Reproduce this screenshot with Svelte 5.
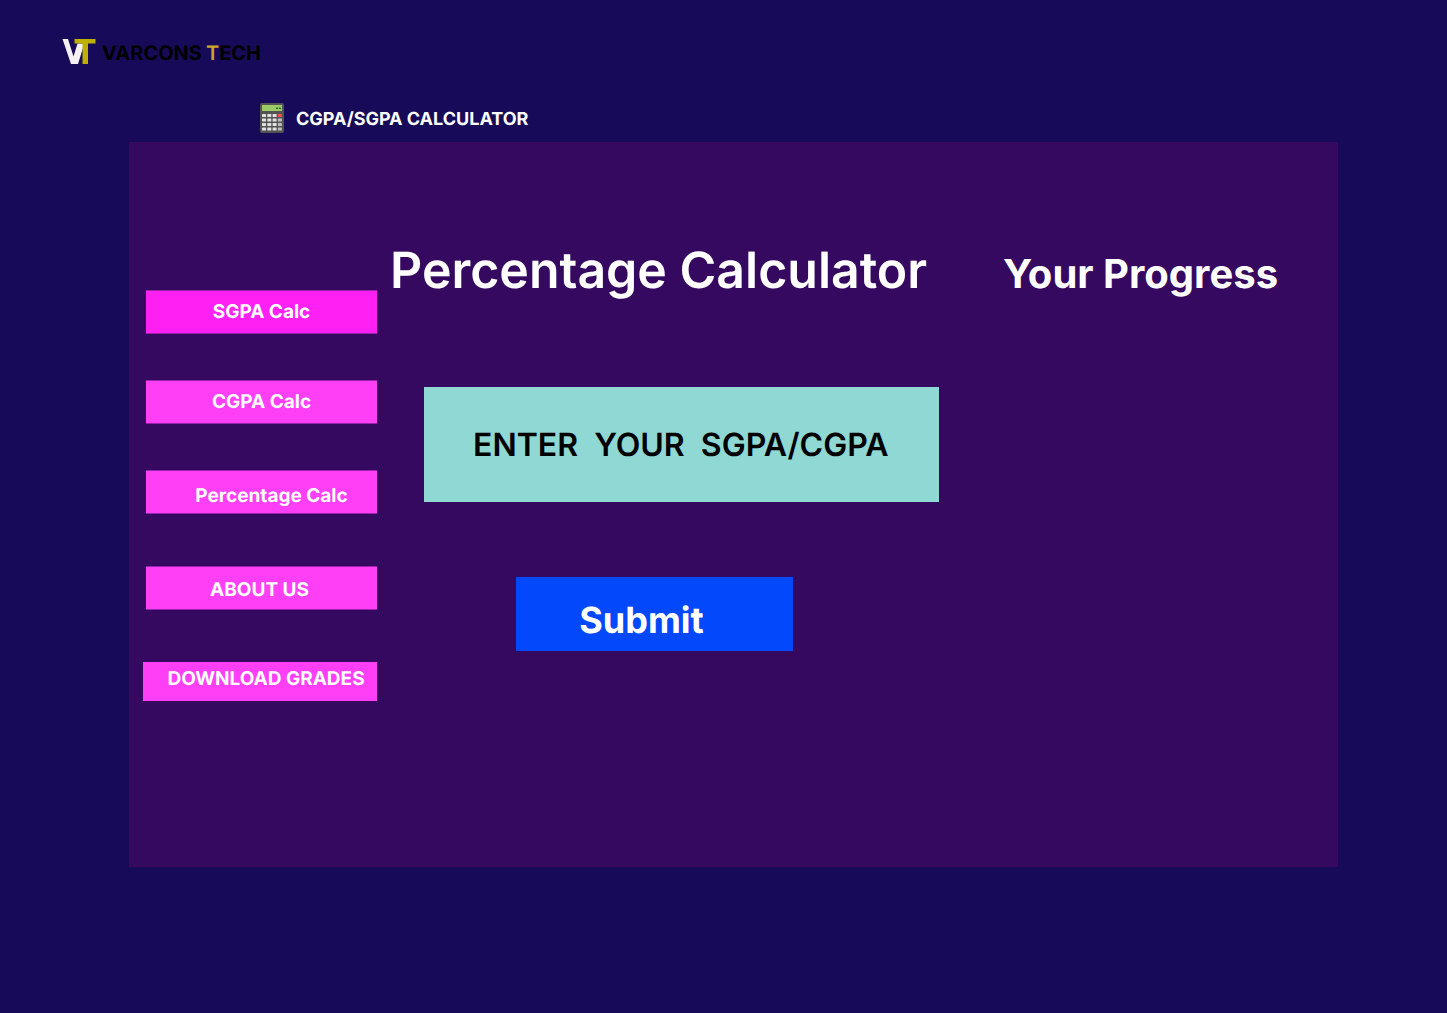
<script>
  const links = [
    { label: 'SGPA Calc', kind: 'active' },
    { label: 'CGPA Calc', kind: '' },
    { label: 'Percentage Calc', kind: 'inset' },
    { label: 'ABOUT US', kind: 'info' },
    { label: 'DOWNLOAD GRADES', kind: 'download' }
  ];
  const keys = [0, 1, 2, 3].flatMap((row) => [0, 1, 2, 3].map((col) => ({ row, col })));
  let score = $state('');
</script>

<div class="page">
  <header>
    <a class="brand" href="#home">
      <svg width="34" height="26" viewBox="0 0 34 26" aria-hidden="true">
        <path d="M0.500 0H6L11.5 17.500L15.500 4.500H21V9L16 25H9Z" fill="#f5f1f3" />
        <path d="M12.500 0H33.500V4.500H26V25H20.500V4.500H12.500Z" fill="#bdb000" />
      </svg>
      <span class="name">VARCONS<b>T</b>ECH</span>
    </a>
    <div class="title">
      <svg width="24" height="30" viewBox="0 0 24 30" aria-hidden="true">
        <rect width="24" height="30" rx="2" fill="#535353" />
        <rect x="2" y="2" width="20" height="6" fill="#9ccc65" />
        <path d="M16 4.500h2v1.500h-2zM19 4.500h2v1.500h-2z" fill="#33691e" />
        {#each keys as { row, col }}
          <rect
            x={2 + col * 5.3}
            y={11 + row * 4.5}
            width="4"
            height="3"
            rx="0.500"
            fill={col === 3 ? (row === 0 ? '#ff4f4f' : '#bdbdbd') : '#e0e0e0'}
          />
        {/each}
      </svg>
      <span>CGPA/SGPA CALCULATOR</span>
    </div>
  </header>

  <main>
    <nav>
      {#each links as link}
        <button type="button" class={link.kind}>{link.label}</button>
      {/each}
    </nav>
    <form onsubmit={(e) => e.preventDefault()}>
      <h1>Percentage Calculator</h1>
      <input type="text" aria-label="Enter your SGPA or CGPA" placeholder="ENTER  YOUR  SGPA/CGPA" bind:value={score} />
      <button type="submit">Submit</button>
    </form>
    <section>
      <h2>Your Progress</h2>
    </section>
  </main>
</div>

<style>
  :global(body) {
    margin: 0;
    background: #170b59;
  }
  .page {
    box-sizing: border-box;
    min-height: 100vh;
    background: #170b59;
    color: #fff;
    font-family: Inter, sans-serif;
    text-rendering: geometricPrecision;
  }
  header {
    padding: 39px 62px 9px;
  }
  .brand {
    display: flex;
    width: fit-content;
    gap: 6px;
    color: #000;
    text-decoration: none;
  }
  .name {
    font-size: 20px;
    font-weight: 700;
    line-height: 28px;
  }
  .name b {
    margin-left: 4px;
    color: #cba52c;
    font-weight: 600;
  }
  .title {
    display: flex;
    align-items: center;
    gap: 12px;
    margin: 36px 0 0 198px;
    font-size: 18px;
    font-weight: 700;
  }
  .title span {
    padding-top: 4px;
    line-height: 26px;
  }
  main {
    display: grid;
    grid-template-columns: 234px 626px 1fr;
    box-sizing: border-box;
    min-height: 725px;
    margin: 0 109px 0 129px;
    padding: 96px 14px 96px;
    background: #360961;
  }
  nav {
    display: flex;
    flex-direction: column;
    align-items: flex-end;
    gap: 46px;
    padding-top: 52px;
  }
  button {
    border: 0;
    color: #fff;
    font-family: inherit;
    text-rendering: inherit;
    cursor: pointer;
  }
  nav button {
    box-sizing: border-box;
    width: 231px;
    height: 44px;
    padding: 0;
    border: solid #9a25ac;
    border-width: 1px 0;
    background: #ff3ff5;
    background-clip: padding-box;
    font-size: 19px;
    font-weight: 700;
    line-height: 24px;
  }
  nav .active {
    background: #ff21f4;
    background-clip: padding-box;
  }
  nav .inset {
    padding: 8px 0 0 20px;
  }
  nav .info,
  nav .download {
    margin-top: 6px;
  }
  nav .info {
    padding: 4px 4px 0 0;
  }
  nav .download {
    width: 234px;
    height: 39px;
    padding: 0 0 6px 12px;
    border: 0;
  }
  form {
    display: flex;
    flex-direction: column;
    align-items: flex-start;
  }
  h1,
  h2 {
    margin: 0;
    white-space: nowrap;
  }
  h1 {
    margin-left: 13px;
    font-size: 50px;
    font-weight: 600;
    line-height: 66px;
  }
  h2 {
    padding-top: 4px;
    font-size: 40px;
    font-weight: 700;
    line-height: 64px;
  }
  input {
    box-sizing: border-box;
    width: 515px;
    height: 115px;
    margin: 83px 0 75px 47px;
    padding: 0 49px;
    border: 0;
    border-radius: 0;
    background: #90d8d3;
    color: #000;
    font-family: inherit;
    font-size: 32px;
    font-weight: 600;
    text-rendering: inherit;
  }
  input::placeholder {
    color: #000;
    opacity: 1;
  }
  form button {
    width: 277px;
    height: 74px;
    margin-left: 139px;
    padding: 12px 26px 0 0;
    background: #0348fb;
    font-size: 36px;
    font-weight: 700;
  }
</style>
